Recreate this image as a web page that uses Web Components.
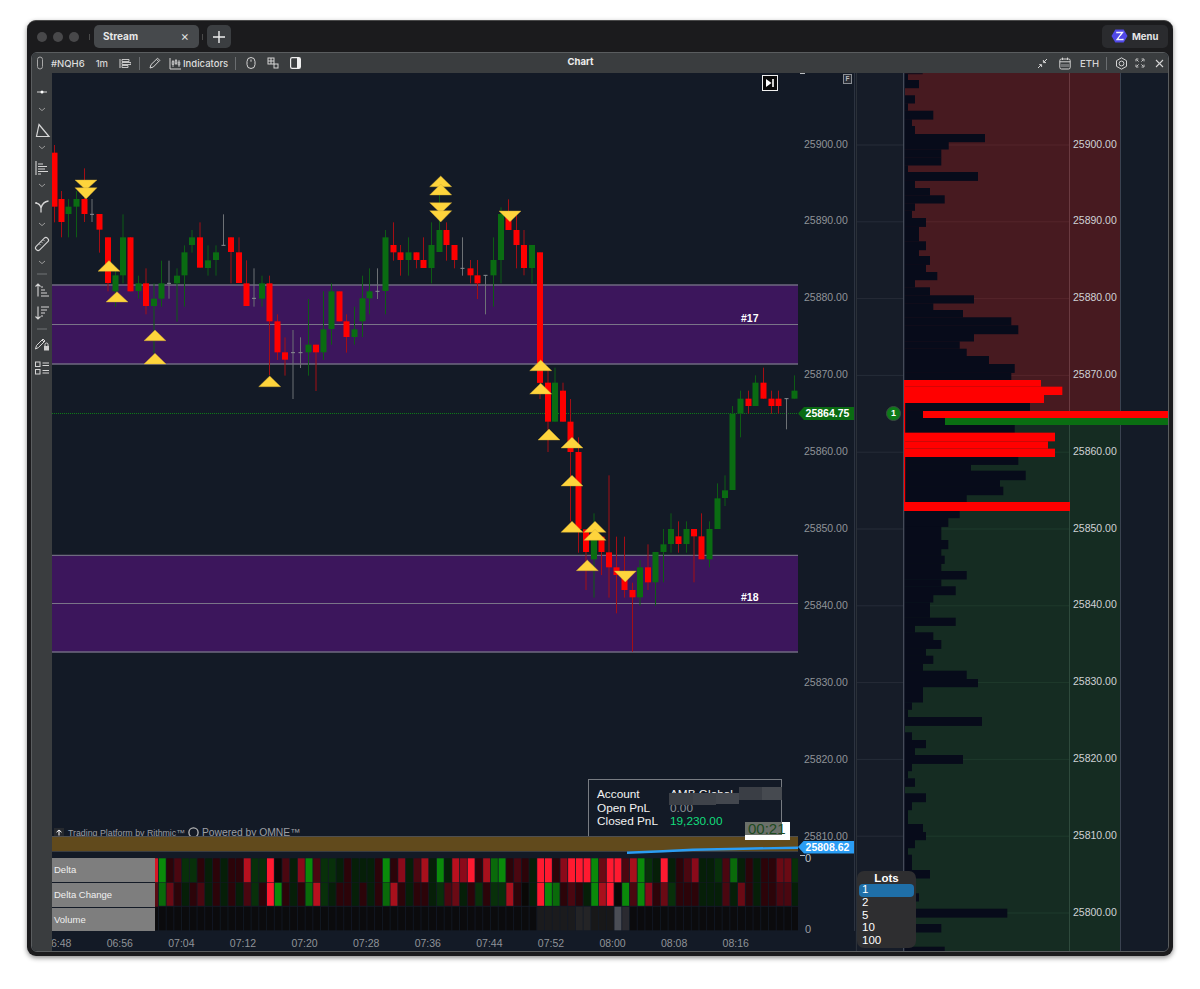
<!DOCTYPE html>
<html><head><meta charset="utf-8"><title>Chart</title>
<style>
html,body{margin:0;padding:0;background:#fff;overflow:hidden}
body{width:1200px;height:989px;font-family:"Inter","Liberation Sans",sans-serif}
</style></head>
<body>
<app-window>
  <title-bar></title-bar>
  <chart-panel>
    <panel-header></panel-header>
    <panel-body>
      <tool-rail></tool-rail>
      <chart-main>
        <chart-pane></chart-pane>
        <price-axis></price-axis>
        <heat-strip></heat-strip>
        <heat-axis></heat-axis>
        <time-axis></time-axis>
      </chart-main>
      <ladder-pane><lots-popup></lots-popup></ladder-pane>
    </panel-body>
  </chart-panel>
</app-window>
<script>
function def(name, css, html, init){
  customElements.define(name, class extends HTMLElement{
    constructor(){super();const s=this.attachShadow({mode:'open'});
      s.innerHTML='<style>'+css+'</style>'+(typeof html==='function'?html():html);}
    connectedCallback(){ if(init) init(this.shadowRoot,this); }
  });
}
const I=(w,h,inner,extra='')=>`<svg width="${w}" height="${h}" viewBox="0 0 ${w} ${h}" fill="none" stroke="currentColor" ${extra}>${inner}</svg>`;

def('app-window',`:host{display:flex;flex-direction:column;box-sizing:border-box;position:absolute;left:27px;top:20px;width:1146px;height:936px;background:#1b1b1d;border-radius:9px;border-top:1px solid #4a4a4a;box-shadow:0 2px 5px rgba(0,0,0,.45);padding:0 4px 4px}`,`<slot></slot>`);

const LOGO=`<svg width="17" height="14" viewBox="0 0 17 14" style="flex:none"><path d="M4.300 .6h8.400l3.800 6.400-3.800 6.400H4.300L.5 7z" fill="#5048e8"/><path d="M5.200 3.600h6.200L6.200 10.400h6.400" fill="none" stroke="#f4f4ff" stroke-width="1.500"/><path d="M9.600 7l1.800 2.400H8z" fill="#5048e8"/></svg>`;

def('title-bar',`:host{display:flex;align-items:center;height:31px;flex:none;color:#ddd}
.l{width:10px;height:10px;border-radius:50%;background:#48484a;margin-right:6px;flex:none}
.lights{display:flex;margin-left:6px;width:52px}
.sep{width:1px;height:6px;background:#4a4a4a;flex:none}
.tab{margin-left:4px;width:105px;height:23px;background:#46494c;border-radius:5px;display:flex;align-items:center;justify-content:space-between;box-sizing:border-box;padding:0 9px 1px;font:700 10px "Inter","Liberation Sans",sans-serif;color:#e8e8e8}
.x{font:400 13px "Inter","Liberation Sans",sans-serif;color:#ddd;margin-right:1px}
.plus{margin-left:4px;width:24px;height:23px;background:#3b3e41;border-radius:5px;display:flex;align-items:center;justify-content:center;color:#eee}
.sp{flex:1}
.menu{width:66px;height:23px;background:#2a2b2e;border-radius:5px;display:flex;align-items:center;box-sizing:border-box;padding:0 0 1px 9px;gap:4px;font:700 9.500px "Inter","Liberation Sans",sans-serif;color:#e6e6e6;margin-right:1px}`,
`<div class="lights"><i class="l"></i><i class="l"></i><i class="l"></i></div><i class="sep"></i>
<div class="tab"><span>Stream</span><span class="x">×</span></div><i class="sep" style="margin-left:3px"></i>
<div class="plus">${I(14,14,'<path d="M7 1v12M1 7h12" stroke-width="1.4"/>')}</div><div class="sp"></div>
<div class="menu">${LOGO}<span>Menu</span></div>`);

def('chart-panel',`:host{display:flex;flex-direction:column;flex:1;min-height:0;border:1px solid #5a5d5f;border-radius:6px;overflow:hidden;background:#131a26}`,`<slot></slot>`);

def('panel-header',`:host{display:flex;align-items:center;height:20px;flex:none;background:#3a3d3f;color:#d4d4d4;font:500 9.500px "Inter","Liberation Sans",sans-serif;position:relative}
.g{display:flex;align-items:center}
.s{width:1px;height:13px;background:#6a6d70;flex:none}
.t{position:absolute;left:0;right:0;top:3px;text-align:center;font-weight:700;color:#eee;pointer-events:none;padding-right:39px;box-sizing:border-box}
.sp{flex:1}
svg{flex:none;display:block}`,
`<div class="t">Chart</div>
<div class="g" style="margin-left:5px">${I(6,14,'<rect x=".5" y="1" width="5" height="12" rx="2.5" stroke="#a8a8a8"/>')}
<span style="margin-left:8px;color:#ddd">#NQH6</span><span style="margin-left:11px">1m</span>
<span style="margin-left:11px">${I(12,12,'<path d="M1 2v9"/><path d="M3 2.5h7v2H3zM3 5.5h9v2H3zM3 8.5h6v2H3z" stroke-width=".9"/>')}</span>
<i class="s" style="margin-left:8px"></i>
<span style="margin-left:8px">${I(13,13,'<path d="M2 11l1-3.4L9.6 1.2l2.2 2.2L5.3 10z"/><path d="M8.6 2.4l2 2" />')}</span>
<span style="margin-left:8px">${I(13,13,'<path d="M1 1v11h11"/><path d="M4 3v7M3.200 4.500h1.600v3H3.200zM7 2v6M6.200 3.500h1.600v3H6.200zM10 3v7M9.200 5h1.600v3H9.200z" stroke-width=".8"/>')}</span>
<span style="margin-left:1px;color:#ddd">Indicators</span>
<i class="s" style="margin-left:7px"></i>
<span style="margin-left:10px">${I(10,14,'<rect x="1" y="1.5" width="8" height="11" rx="4"/><path d="M5 3.5v2.2"/>')}</span>
<span style="margin-left:11px">${I(12,12,'<rect x="1" y="1" width="6" height="6"/><path d="M4 1v6M1 4h6"/><rect x="7" y="7" width="4" height="4"/>')}</span>
<span style="margin-left:11px">${I(11,12,'<rect x=".6" y=".6" width="9.8" height="10.8" rx="1.6" stroke="#eee" stroke-width="1.2"/><path d="M7 1h3v10H7z" fill="#eee" stroke="none"/>')}</span></div>
<div class="sp"></div>
<div class="g" style="margin-right:4px">
${I(11,11,'<path d="M1 10l3-3M2.2 6.6h2.4v2.4M10 1L7 4M6.4 2v2.6H9"/>')}
<span style="margin-left:11px">${I(12,13,'<rect x=".8" y="2" width="10.4" height="10" rx="1.6"/><path d="M.8 4.8h10.4M3.5.6v2.4M8.5.6v2.4"/><path d="M3 7v3M5 7v3M7 7v3M9 7v3" stroke-width=".7"/>')}</span>
<span style="margin-left:9px">ETH</span><i class="s" style="margin-left:7px"></i>
<span style="margin-left:8px">${I(13,13,'<path d="M6.5 .8l5 2.9v5.6l-5 2.9-5-2.9V3.7z"/><circle cx="6.5" cy="6.5" r="2.4"/>')}</span>
<span style="margin-left:7px">${I(10,10,'<path d="M1 3.4V1h2.4M6.6 1H9v2.4M9 6.6V9H6.6M3.4 9H1V6.6M3.6 3.6L2 2M6.4 3.6L8 2M3.6 6.4L2 8M6.4 6.4L8 8" stroke-width=".9"/>')}</span>
<span style="margin-left:10px">${I(9,9,'<path d="M1 1l7 7M8 1L1 8" stroke-width="1.1"/>')}</span></div>`);

def('panel-body',`:host{display:flex;flex:1;min-height:0}`,`<slot></slot>`);

/* ---- tool rail ---- */
const railItems=[
 [91.500,'<path d="M3 8h10" stroke-width="1"/><circle cx="8" cy="8" r="1.500" fill="#fff" stroke="none"/>'],
 [109,'c'],
 [130,'<path d="M5 2.500L15 14.500H2.500z" stroke-width="1.200"/>'],
 [147,'c'],
 [168,'<path d="M2 1v14M4 4h5M4 6.500h9M4 9h7M4 11.500h10M4 14h3" stroke-width="1.100"/>'],
 [185,'c'],
 [206,'<path d="M2 5c2.500.5 4.500 2.500 5 5v4.500M14.500 3c-4 .5-6.500 3-7.500 7" stroke-width="1.300"/><circle cx="2" cy="5" r=".9" fill="#d6d6d6" stroke="none"/>'],
 [224,'c'],
 [244,'<rect x="0" y="5.500" width="16" height="5" rx="2.200" transform="rotate(-45 8 8)" stroke-width="1.100"/><path d="M5.500 8l1.200 1.200M7.500 6l1.200 1.200M9.500 4l1.200 1.200" stroke-width=".8"/>'],
 [262,'c'],
 [274,'s'],
 [290,'<path d="M4 14.500V2M1.500 4.500L4 2l2.500 2.500M7 14h8M7 11h6M7 8h4M7 5h2" stroke-width="1.100"/>'],
 [313,'<path d="M4 1.500V14M1.500 11.500L4 14l2.500-2.500M7 2h8M7 5h6M7 8h4M7 11h2" stroke-width="1.100"/>'],
 [329,'s'],
 [344,'<path d="M1.500 13l1-3.500L9 3l2 2-6.500 6.500zM8 4l2 2"/><rect x="10" y="10" width="5" height="4.500" fill="#ccc" stroke="none"/><path d="M11 10V8.500a1.500 1.500 0 013 0V10"/>'],
 [368,'<rect x="1.500" y="2" width="4.500" height="4.500"/><rect x="1.500" y="9.500" width="4.500" height="4.500"/><path d="M8.500 3h6.500M8.500 5.500h6.500M8.500 10.500h6.500M8.500 13h6.500"/>'],
];
def('tool-rail',`:host{display:flex;flex-direction:column;align-items:center;width:20px;flex:none;background:#3a3d3f;color:#d6d6d6}
.i{height:16px;width:16px;flex:none;display:block;overflow:visible}
.sp{height:2px;width:10px;background:#55585a;flex:none}`,
()=>{let y=73,o='';for(const [c,p] of railItems){
  if(p==='s'){o+=`<i class="sp" style="margin-top:${c-1-y}px"></i>`;y=c+1;continue;}
  const inner=p==='c'?'<path d="M5 7l3 2.600 3-2.600" stroke="#9a9a9a"/>':p;
  o+=`<svg class="i" style="margin-top:${c-8-y}px" viewBox="0 0 16 16" fill="none" stroke="currentColor">${inner}</svg>`;y=c+8;}
  return o;});

def('chart-main',`:host{display:grid;grid-template-columns:746px 57px;grid-template-rows:785px 73px 20px;flex:none;background:#131a26}
::slotted(time-axis){grid-column:1 / 3}`,`<slot></slot>`);

/* ---- candles ---- */
const C=[];
function add(ox,oy,list){for(const a of list){const m=v=>oy+v/3;const x=ox+a[0]/3;
  if(a[5]==='d')C.push({x,d:1,wt:m(a[1]),t:m(a[2]),wb:m(a[4])});
  else C.push({x,wt:m(a[1]),bt:m(a[2]),bb:m(a[3]),wb:m(a[4]),c:a[5]});}}
add(28,130,[[80,45,68,230,277,'r'],[101,183,207,276,322,'r'],[122,207,230,252,322,'g'],[146,183,207,230,322,'g'],[170,115,207,252,276,'r'],[192,207,253,0,276,'d'],[215,252,252,299,368,'r'],[240,322,322,459,484,'r'],[263,415,436,484,530,'g'],[285,253,322,436,460,'g'],[308,322,322,484,484,'r'],[332,437,460,483,506,'g'],[354,415,460,528,553,'r'],[378,460,506,528,670,'g'],[401,392,460,506,530,'g'],[423,392,460,0,506,'d'],[447,415,437,460,575,'g'],[470,346,367,436,530,'g'],[492,300,322,345,368,'g'],[516,277,322,413,413,'r'],[540,346,391,414,437,'g'],[564,346,367,390,437,'g'],[586,253,346,0,346,'d'],[609,322,322,366,460,'r'],[633,322,367,459,459,'r'],[655,391,460,528,528,'r'],[678,415,505,0,530,'d'],[702,437,460,506,530,'g'],[724,437,460,574,735,'r']]);
add(260,170,[[52,433,454,547,570,'r'],[75,502,547,569,617,'r'],[99,480,548,0,687,'d'],[122,502,548,0,594,'d'],[145,387,524,547,617,'g'],[168,524,524,547,663,'r'],[190,364,478,547,570,'g'],[214,340,364,477,524,'g'],[238,364,364,454,454,'r'],[260,433,454,501,548,'r'],[283,410,478,501,524,'g'],[307,317,385,454,501,'g'],[329,295,364,385,433,'g'],[352,295,364,0,387,'d'],[376,180,202,363,433,'g'],[400,157,225,247,272,'r'],[422,225,247,270,317,'r'],[445,202,247,270,317,'g'],[469,247,247,270,295,'r'],[491,202,270,294,294,'r'],[515,157,225,294,340,'g'],[539,70,180,246,246,'g'],[560,157,180,225,272,'r'],[584,225,225,270,295,'r'],[608,202,295,0,317,'d'],[631,270,295,316,340,'r'],[653,270,316,340,387,'r'],[677,316,316,0,433,'d'],[701,202,270,316,410,'g'],[723,112,132,270,340,'g'],[746,88,132,180,180,'r'],[770,135,180,225,295,'r'],[792,180,225,294,316,'r'],[816,225,225,294,340,'g'],[840,247,247,638,638,'r']]);
add(520,360,[[60,0,0,68,117,'r'],[84,30,68,185,276,'r'],[105,23,68,185,185,'g'],[129,68,92,185,185,'r'],[152,117,185,276,484,'r'],[175,232,276,507,578,'r'],[198,508,508,576,690,'r'],[222,460,530,598,713,'g'],[244,530,530,576,645,'r'],[267,346,577,622,713,'r'],[290,530,622,645,760,'r'],[313,530,645,690,713,'r'],[337,668,690,712,875,'r'],[360,600,622,712,737,'g'],[384,553,622,667,690,'r'],[406,576,576,667,737,'g'],[430,507,553,576,667,'g'],[453,460,507,552,578,'g'],[475,484,529,552,578,'r'],[499,484,507,552,578,'g'],[522,507,507,529,667,'r'],[544,460,529,598,598,'r'],[568,484,507,598,622,'g'],[592,370,415,507,507,'g'],[615,346,391,414,438,'g'],[637,138,161,390,390,'g'],[661,92,116,161,232,'g'],[685,92,116,138,161,'r'],[707,46,68,138,138,'g'],[730,23,68,116,116,'r'],[754,92,116,138,161,'r'],[776,92,116,138,161,'r'],[800,115,116,0,208,'d'],[823,46,92,116,116,'g']]);
const TRI=[[109,260.6,271.3,1],[117,291.7,302,1],[155,330,340.7,1],[155,353.3,364,1],[269.7,376,386.7,1],
[440.7,176,186.7,1],[440.7,184,195,1],[540.7,360,370.7,1],[540.7,383.3,394,1],[549,429,440,1],[572,437.3,448,1],[572,475.3,486,1],[572,521.3,532.3,1],[595,521.3,532.3,1],[595,529.3,540.3,1],[587.3,560,570.7,1],
[86,190,180,0],[86,199,187.7,0],[440.7,213.3,202.7,0],[440.7,222,210.7,0],[510,221.7,211,0],[625.3,582,571,0]];
function chartSvg(){
 let s='';
 const zone=(a,b,c)=>{s+=`<rect x="52" y="${a}" width="746" height="${c-a}" fill="#3c165c"/>`;
  s+=`<path d="M52 ${a}H798M52 ${c}H798" stroke="#6f6a80" stroke-width="1.300"/><path d="M52 ${b}H798" stroke="#7a7488" stroke-width="1"/>`;};
 zone(285,324.500,364);zone(555.300,603.500,652);
 s+='<path d="M52 413.500H798" stroke="#0e7a18" stroke-width="1" stroke-dasharray="1 1"/>';
 for(const k of C){const x=Math.round(k.x*2)/2;
  if(k.d){s+=`<path d="M${x} ${k.wt}V${k.wb}" stroke="#6d7175" stroke-width="1"/><path d="M${x-2} ${k.t}h4" stroke="#8a8e92" stroke-width="1"/>`;continue;}
  const wc=k.c==='r'?'#a40e14':'#0d5c14',bc=k.c==='r'?'#ff0000':'#0a6c12';
  s+=`<path d="M${x} ${k.wt}V${k.wb}" stroke="${wc}" stroke-width="1"/><rect x="${x-3}" y="${k.bt}" width="6" height="${k.bb-k.bt}" fill="${bc}"/>`;}
 for(const [x,a,b] of TRI){s+=`<path d="M${x-11} ${b}L${x} ${a}L${x+11} ${b}Z" fill="#fed43c" stroke="#c9a634" stroke-width=".4"/>`;}
 return `<svg width="746" height="785" viewBox="52 73 746 785" style="display:block">${s}</svg>`;
}
def('chart-pane',`:host{display:block;position:relative;overflow:hidden;font-family:"Liberation Sans",Arial,sans-serif}
.lab{position:absolute;color:#fff;font:700 10.500px "Liberation Sans",sans-serif}
.wm{position:absolute;left:2px;top:754px;display:flex;align-items:center;color:#9c9ea3;font-size:8.800px;white-space:nowrap}
.wm .b{font-size:10.300px}
.wmi{width:10px;height:9px;background:#26292e;margin-right:4px;color:#fff;display:flex;align-items:center;justify-content:center}
.band{position:absolute;left:0;top:762.500px;width:746px;height:16.500px;background:#614a1c;border-top:1px solid #4f4f4f;border-bottom:1px solid #3a3d42;box-sizing:border-box}
.band svg{display:block}
.play{position:absolute;left:710px;top:2px;width:16px;height:16px;box-sizing:border-box;border:1.500px solid #f0f0f0;background:#0a0a0a;display:flex;align-items:center;justify-content:center}
.acct{position:absolute;left:536px;top:706px;width:194px;height:57px;box-sizing:border-box;border:1px solid #787c82;border-bottom:none;background:#131a26;color:#f2f2f2;font-size:11.800px}
.row{position:absolute;left:8px;white-space:nowrap;line-height:14px}
.val{position:absolute;left:73px;top:0}
.blk{position:absolute}
.timer{position:absolute;left:693px;top:749px;width:45px;height:18px;background:#fff;color:#1d4a1f;font-size:15px;line-height:14px}
.timer i{position:absolute;left:0;top:0;width:37px;height:13px;background:#6b706a}
.timer span{position:absolute;left:3px;top:0;height:18px;line-height:14px}`,
()=>chartSvg()+`
<div class="lab" style="left:689px;top:239px">#17</div>
<div class="lab" style="left:689px;top:518px">#18</div>
<div class="play"><svg width="10" height="10" viewBox="0 0 10 10"><path d="M1 1l5.500 4L1 9z" fill="#fff"/><path d="M8 1v8" stroke="#fff" stroke-width="1.600"/></svg></div>
<div class="wm"><span class="wmi">${I(8,7,'<path d="M4 6.500V1M1.500 3.200L4 1l2.500 2.200" stroke-width="1"/>')}</span><span>Trading Platform by Rithmic™</span>
<svg style="margin:0 3px 0 3px" width="11" height="11" viewBox="0 0 11 11" fill="none"><circle cx="5.500" cy="5.500" r="4.600" stroke="#b8b8b8" stroke-width="1.300"/></svg><span class="b">Powered by OMNE™</span></div>
<div class="band"><svg width="746" height="15" viewBox="52 836 746 15" fill="none" style="overflow:visible"><path d="M627 851.700L663 850.300L693 848.700L743 847.700L798 846.700" stroke="#2a9df4" stroke-width="2.400"/></svg></div>
<div class="acct">
 <div class="row" style="top:7px">Account<span class="val" style="top:0">AMB Global</span></div>
 <div class="row" style="top:20.500px">Open PnL<span class="val" style="color:#8d9196">0.00</span></div>
 <div class="row" style="top:34px">Closed PnL<span class="val" style="color:#12dc7c">19,230.00</span></div>
 <i class="blk" style="left:80px;top:13px;width:24px;height:12px;background:#3b3f46"></i>
 <i class="blk" style="left:104px;top:13px;width:23px;height:12px;background:#3f434a"></i>
 <i class="blk" style="left:127px;top:13px;width:23px;height:11px;background:#43474e"></i>
 <i class="blk" style="left:150px;top:7px;width:23px;height:13px;background:#3a3e45"></i>
 <i class="blk" style="left:173px;top:7px;width:20px;height:13px;background:#464a50"></i>
</div>
<div class="timer"><i></i><span>00:21</span></div>`);

const P=[25900,25890,25880,25870,25860,25850,25840,25830,25820,25810];
def('price-axis',`:host{display:block;position:relative;border-right:1px solid #2c3340;box-sizing:border-box;overflow:hidden;color:#8f9398;font:10.500px "Liberation Sans",Arial,sans-serif;padding:32.500px 0 0 6px}
.p{height:76.900px;line-height:76.900px;white-space:nowrap}
.tag{position:absolute;left:0;width:56px;height:13px;line-height:13px;color:#fff;font-weight:700;text-align:center;clip-path:polygon(0 50%,6px 0,100% 0,100% 100%,6px 100%);padding-left:3px;box-sizing:border-box}
.f{position:absolute;left:45px;top:1px;width:9px;height:10px;border:1px solid #8a8e94;box-sizing:border-box;font:700 6.500px "Liberation Sans",sans-serif;text-align:center;line-height:8px;color:#b8bbc0;background:#2a2e36}
.tick{position:absolute;left:2px;top:0;width:5px;height:1px;background:#b9bcc0}`,
()=>P.map(v=>`<div class="p">${v}.00</div>`).join('')+
`<i class="tick"></i><div class="f">F</div>
<div class="tag" style="top:334px;background:#0a6b12">25864.75</div>
<div class="tag" style="top:767.500px;background:#2a9df4">25808.62</div>`);

/* ---- heat ---- */
const HC={R:'#ff1a30',Q:'#b8101e',S:'#a8101c',T:'#8a0a1a',U:'#6a0a14',r:'#4a0710',q:'#2c0409',k:'#0a0806',
 G:'#0a8a0a',H:'#0a6a0a',g:'#0a4a0c',h:'#08300a',j:'#061f08'};
const D='G q r h h q j q j q q Q h h R k r j T G r h h j q j j j q G q T j r S j G j Q T R q S H G q r q j R R q T R R R G U R R r S G h j R j q r T j j h r H j q j q q U U h'.split(' ');
const E='H U q j q r j q j q j r h q R G q j q H Q h j q q j q j q H S q j q q j h r U j q h q h h S q k j R G H q r q j G S R k G r G T q U h q q q j j j r j U q j q q r r j'.split(' ');
function heatSvg(){
 let s='';const W=7.722,wd=6.900;
 const xOf=i=>162.300-wd/2+(i-14)*W;
 const row=(arr,y,h)=>arr.forEach((c,n)=>{const x=xOf(n+14);s+=`<rect x="${x.toFixed(2)}" y="${y}" width="${wd}" height="${h}" fill="${HC[c]}"/>`;});
 s+=`<rect x="155" y="858.300" width="3" height="24" fill="#d81524"/><rect x="155" y="882.800" width="3" height="24" fill="#5a0a12"/>`;
 row(D,858.300,24);row(E,882.800,23);
 for(let n=0;n<83;n++){const i=n+14;let f='#0b0b0d';const zi=i-47;
   if(zi>=16&&zi<=20)f='#1b1b1d';if(zi>=21&&zi<=22)f='#242426';if(zi>=23&&zi<=25)f='#181819';if(zi===26)f='#4a4d55';if(zi===27)f='#2a2a30';
   s+=`<rect x="${xOf(i).toFixed(2)}" y="906.800" width="${wd}" height="23.500" fill="${f}"/>`;}
 s+=`<rect x="155" y="906.800" width="3" height="23.500" fill="#0b0b0d"/>`;
 return `<svg width="643" height="73" viewBox="155 858 643 73" style="display:block;flex:none">${s}</svg>`;
}
def('heat-strip',`:host{display:flex;background:#131a26;overflow:hidden}
.labs{width:103px;flex:none;display:flex;flex-direction:column;gap:1px;font:9.500px "Liberation Sans",Arial,sans-serif;color:#f0f0f0}
.labs div{background:#7e7e7e;height:24px;line-height:24px;padding-left:2px;box-sizing:border-box}
.labs div:last-child{height:23px}`,
()=>`<div class="labs"><div>Delta</div><div>Delta Change</div><div>Volume</div></div>${heatSvg()}`);
def('heat-axis',`:host{display:block;position:relative;color:#9a9ea3;font:11px "Liberation Sans",Arial,sans-serif;border-right:1px solid #2c3340}
.a{position:absolute;left:7px}
.t{position:absolute;left:2px;top:-3px;width:5px;height:1px;background:#b9bcc0}`,`<i class="t"></i><div class="a" style="top:-6px;color:#c0c3c6">0</div><div class="a" style="top:65px">0</div>`);

def('time-axis',`:host{display:flex;overflow:hidden;color:#8f9398;font:10.500px "Liberation Sans",Arial,sans-serif;line-height:25px;padding-left:0}
div{width:61.600px;flex:none;text-align:center}
.first{margin-left:-24.600px}`,
()=>['06:48','06:56','07:04','07:12','07:20','07:28','07:36','07:44','07:52','08:00','08:08','08:16'].map((t,i)=>`<div class="${i?'':'first'}">${t}</div>`).join(''));

/* ---- ladder ---- */
const Z=[];
function bars(ox,oy,list){for(const [y0,y1,x] of list)Z.push([oy+y0/3,oy+y1/3,ox+x/3]);}
bars(850,70,[[10,12,218],[12,30,174],[30,54,207],[54,76,165],[76,100,195],[100,122,174],[122,148,250],[148,168,186],[168,192,195],[192,216,405],[216,238,296],[238,262,274],[262,286,274],[286,306,174],[306,332,384],[332,354,195],[354,376,240],[376,400,284],[400,422,195],[422,444,186],[444,470,228],[470,492,207],[492,514,207],[514,540,228],[540,558,207],[558,584,240],[584,606,228],[606,630,262],[630,652,195],[652,676,240],[676,700,372],[700,720,250],[720,742,339],[742,766,484],[766,792,505],[792,814,372],[814,836,329],[836,858,350],[858,882,417],[882,900,494]]);
bars(850,370,[[0,8,494],[8,30,484],[99,122,540],[122,165,300],[165,188,494],[261,284,505],[284,302,363],[302,330,527],[330,350,450],[350,375,460],[375,396,350],[423,444,329],[444,470,295]]);
bars(850,525,[[4,45,274],[45,72,295],[72,92,274],[92,116,284],[116,138,274],[138,163,350],[163,184,274],[184,210,317],[210,232,250],[232,278,240],[278,302,317],[302,322,195],[322,345,250],[345,371,274],[371,392,228],[392,416,250],[416,437,219],[437,462,350],[462,486,384],[486,532,219],[532,554,186],[554,576,174],[576,602,396],[602,622,165],[622,645,186],[645,669,228],[669,690,195],[690,716,339],[716,738,186],[738,760,174],[760,785,195],[785,805,165],[805,831,228],[831,855,186],[855,897,174]]);
bars(850,820,[[12,36,219],[36,60,228],[60,84,195],[84,104,174],[104,150,186],[150,175,240],[175,220,172],[220,244,207],[244,266,174],[266,292,472],[292,312,174],[312,337,274],[337,358,190],[358,380,186],[380,400,284]]);
function ladderSvg(){
 let s=`<rect x="855" y="73" width="50" height="878" fill="#161c28"/><rect x="1121" y="73" width="47" height="878" fill="#141b27"/>
 <rect x="905" y="73" width="216" height="339" fill="#471a20"/><rect x="905" y="412" width="216" height="539" fill="#152c22"/>`;
 for(let i=0;i<11;i++){const y=(145+i*76.800).toFixed(1);
  s+=`<path d="M856 ${y}H904" stroke="#262c38"/><path d="M905 ${y}H1069" stroke="${i<4?'#55252b':'#1e3a2c'}"/>`;}
 s+=`<path d="M856.500 73V951" stroke="#2a3038"/><path d="M1069.500 73V412" stroke="#6a3a40"/><path d="M1069.500 412V951" stroke="#2e4a3c"/><path d="M1120.500 73V951" stroke="#3a4250"/>`;
 for(const [a,b,x] of Z)s+=`<rect x="904" y="${a.toFixed(1)}" width="${(x-904).toFixed(1)}" height="${(b-a+.2).toFixed(1)}" fill="#070b1a"/>`;
 s+=`<path d="M903.700 73V951" stroke="#4a505e" stroke-width="1.200"/>`;
 const rb=(y0,y1,x)=>s+=`<rect x="904" y="${370+y0/3}" width="${850+x/3-904}" height="${(y1-y0)/3}" fill="#ff0000"/>`;
 rb(30,50,573);rb(50,75,637);rb(75,99,582);rb(188,214,615);rb(214,236,594);rb(236,261,615);rb(396,423,660);
 s+=`<rect x="904" y="380" width="1.200" height="131" fill="#ff0000"/>`;
 s+=`<rect x="923" y="411" width="245" height="7" fill="#ff0000"/><rect x="945" y="418" width="223" height="7" fill="#0a6e12"/>`;
 return `<svg width="313" height="878" viewBox="855 73 313 878" style="display:block;grid-area:1/1">${s}</svg>`;
}
def('ladder-pane',`:host{display:grid;width:313px;flex:none;position:relative;overflow:hidden}
.px{grid-area:1/1;padding:32.700px 0 0 218px;color:#cfd2d5;font:10.500px "Liberation Sans",Arial,sans-serif}
.px div{height:76.800px;line-height:76.800px}
.dot{position:absolute;left:31px;top:333px;width:15px;height:15px;box-sizing:border-box;border-radius:50%;background:#0d7a18;border:1px solid #3a4a42;color:#fff;font:700 9px/13px "Liberation Sans",sans-serif;text-align:center}`,
()=>ladderSvg()+`<div class="px">${[...P,25800].map(v=>`<div>${v}.00</div>`).join('')}</div><div class="dot">1</div><slot></slot>`);

def('lots-popup',`:host{display:block;position:absolute;left:2px;top:798px;width:59px;height:77px;border-radius:7px;background:#2e2e30;color:#fff;font:11.500px "Liberation Sans",Arial,sans-serif;box-sizing:border-box;padding-top:1px}
.h{text-align:center;font-weight:700;height:12px;line-height:12px}
.o{height:12.500px;line-height:11px;padding-left:3px;margin:0 2px}
.sel{background:#1f6fa8;border-radius:4px;height:13px}`,
`<div class="h">Lots</div><div class="o sel">1</div><div class="o">2</div><div class="o">5</div><div class="o">10</div><div class="o">100</div>`);
</script>
</body></html>
